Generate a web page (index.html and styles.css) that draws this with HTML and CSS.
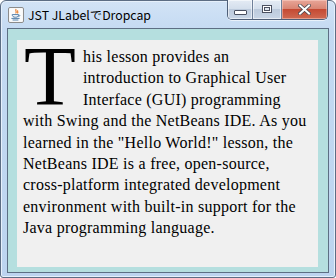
FILE: index.html
```html
<!DOCTYPE html>
<html>
<head>
<meta charset="utf-8">
<link rel="stylesheet" href="styles.css">
</head>
<body>
<div class="window">
  <div class="titlebar">
    <span class="app-icon">
      <svg width="16" height="16" viewBox="0 0 16 16">
        <rect x="0.5" y="0.5" width="15" height="15" rx="1.5" fill="#f4f4f4" stroke="#8c8c8c"/>
        <rect x="1.5" y="1.5" width="13" height="13" fill="#fbfbfb"/>
        <path d="M8.2 2.2 C6.6 3.6 9.6 4.4 7.6 6.4 M9.9 3.3 C8.8 4.4 10.8 5 9.4 6.4" stroke="#e8761e" stroke-width="1.1" fill="none"/>
        <path d="M4.2 7.6 H10.6 C10.6 9.3 9.6 10.2 7.4 10.2 C5.2 10.2 4.2 9.3 4.2 7.6 Z" fill="none" stroke="#5380ab" stroke-width="1"/>
        <path d="M10.6 8.1 C12.2 7.8 12.3 9.4 10.3 9.6" stroke="#5380ab" stroke-width="0.9" fill="none"/>
        <path d="M3.4 11.4 H11.6 M4.6 13 H10.4" stroke="#5380ab" stroke-width="1"/>
      </svg>
    </span>
    <span class="title">JST JLabelでDropcap</span>
    <div class="caption-buttons">
      <div class="cbtn min"><span class="min-glyph"></span></div>
      <div class="cbtn max"><span class="max-glyph"></span></div>
      <div class="cbtn close">
        <svg width="13" height="11" viewBox="0 0 13 11">
          <path d="M2 1.5 L11 9.5 M11 1.5 L2 9.5" stroke="#4a4a52" stroke-width="3.6" stroke-linecap="square"/>
          <path d="M2 1.5 L11 9.5 M11 1.5 L2 9.5" stroke="#ffffff" stroke-width="2" stroke-linecap="square"/>
        </svg>
      </div>
    </div>
  </div>
  <div class="client">
    <div class="panel">
      <p class="text"><span class="drop">T</span>his lesson provides an<br>introduction to Graphical User<br>Interface (GUI) programming<br>with Swing and the NetBeans IDE. As you<br>learned in the "Hello World!" lesson, the<br>NetBeans IDE is a free, open-source,<br>cross-platform integrated development<br>environment with built-in support for the<br>Java programming language.</p>
    </div>
  </div>
</div>
</body>
</html>
```

FILE: styles.css
```css
html, body {
  margin: 0;
  padding: 0;
  background: #ffffff;
}

.window {
  width: 336px;
  height: 278px;
  box-sizing: border-box;
  border: 1px solid #5c6d84;
  border-radius: 6px 6px 3px 3px;
  background: linear-gradient(to bottom, #d2e3f6 0px, #c4daf2 30px, #bcd4ef 100%);
  box-shadow: inset 0 0 0 1px #e6f0fb;
  padding: 0 6px 4px 6px;
  display: flex;
  flex-direction: column;
}

.titlebar {
  height: 27px;
  display: flex;
  align-items: flex-start;
  flex: none;
}

.app-icon {
  width: 16px;
  height: 16px;
  margin: 6px 0 0 1px;
  display: block;
}

.app-icon svg {
  display: block;
}

.title {
  margin: 6px 0 0 4px;
  font-family: "Noto Sans CJK JP", "Noto Sans", sans-serif;
  font-size: 12.3px;
  line-height: 16px;
  color: #000000;
}

.caption-buttons {
  margin: -1px 1px 0 auto;
  display: flex;
  height: 19px;
  border: 1px solid #4e5f78;
  border-top: none;
  border-radius: 0 0 5px 5px;
  overflow: hidden;
  box-shadow: 0 1px 0 rgba(255,255,255,0.6);
}

.cbtn {
  height: 19px;
  display: flex;
  align-items: center;
  justify-content: center;
  box-sizing: border-box;
  background: linear-gradient(to bottom, #e4ebf4 0%, #d4dfec 45%, #bccadc 50%, #c9d6e6 100%);
  box-shadow: inset 0 0 0 1px rgba(255,255,255,0.55);
}

.cbtn.min {
  width: 25px;
  border-right: 1px solid #6f8099;
}

.cbtn.max {
  width: 29px;
  border-right: 1px solid #6f8099;
}

.cbtn.close {
  width: 45px;
  background: linear-gradient(to bottom, #e8a698 0%, #d98674 45%, #c54a33 50%, #cf6a52 100%);
  box-shadow: inset 0 0 0 1px rgba(255,220,210,0.45);
}

.min-glyph {
  width: 11px;
  height: 3px;
  background: #ffffff;
  border: 1px solid #4a5060;
  border-radius: 1px;
  margin-top: 6px;
}

.max-glyph {
  width: 8px;
  height: 6px;
  border: 1px solid #4a5060;
  box-shadow: inset 0 0 0 1px #ffffff, inset 0 0 0 2px #4a5060;
  background: #dfe6ef;
  margin-top: -1px;
}

.client {
  flex: 1;
  border: 1px solid #5d6f84;
  background: #b5dfdf;
  padding: 11px 10px 5px 9px;
  display: flex;
}

.panel {
  flex: 1;
  background: #f0f0f0;
  padding: 0 6px 0 6px;
}

.text {
  margin: 6px 0 0 0;
  font-family: "Liberation Serif", "Times New Roman", serif;
  font-size: 16px;
  line-height: 21.4px;
  letter-spacing: 0.25px;
  white-space: nowrap;
  color: #000000;
}

.drop {
  float: left;
  font-size: 85px;
  line-height: 61px;
  height: 61px;
  letter-spacing: 0;
  margin: 0 7px 0 1px;
}
```
